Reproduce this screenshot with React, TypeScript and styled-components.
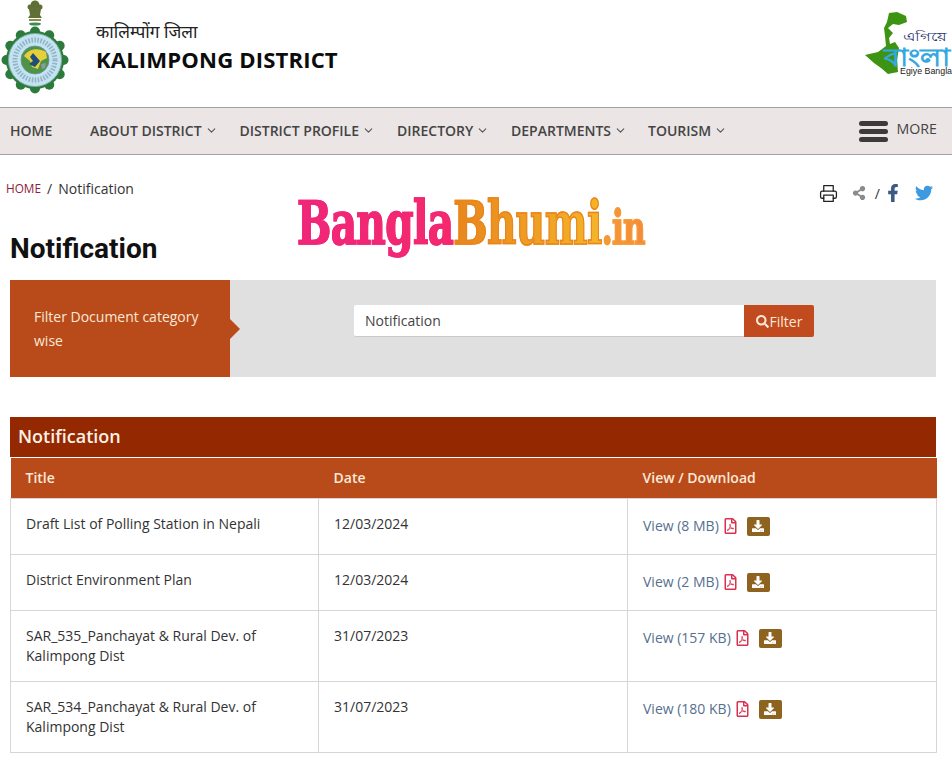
import React, { FC } from 'react'
import styled, { createGlobalStyle } from 'styled-components'
import { FaDownload, FaFacebookF, FaRegFilePdf, FaSearch, FaShareAlt, FaTwitter } from 'react-icons/fa'
import { FiChevronDown, FiPrinter } from 'react-icons/fi'

const GlobalStyle = createGlobalStyle`
	* {
		box-sizing: border-box;
	}
	html, body {
		margin: 0;
		padding: 0;
		background: #fff;
		overflow: hidden;
		font-family: 'Open Sans', 'Noto Sans', sans-serif;
		color: #333;
	}
`

const Page = styled.div`
	position: relative;
	width: 952px;
	height: 759px;
	overflow: hidden;
`

const Header = styled.header`
	height: 107px;
	display: flex;
	align-items: flex-start;
	justify-content: space-between;
`

const Brand = styled.div`
	display: flex;
	align-items: center;
	gap: 26px;
`

const BrandText = styled.div`
	display: flex;
	flex-direction: column;
	margin-top: -6px;
`

const HindiName = styled.span`
	font-size: 17.3px;
	line-height: 24px;
	color: #222;
	font-family: 'Noto Sans', 'Lohit Devanagari', 'FreeSans', sans-serif;
`

const EnglishName = styled.span`
	font-size: 22.1px;
	font-weight: 700;
	line-height: 30px;
	color: #0c0c0c;
	letter-spacing: 0.15px;
`

const Nav = styled.nav`
	height: 48px;
	background: #ebe5e5;
	border-top: 1px solid #a5a1a1;
	border-bottom: 1px solid #a5a1a1;
	display: flex;
	align-items: center;
	padding: 0 15px 0 10px;
	font-size: 14px;
	font-weight: 600;
	color: #444;
`

const NavItem = styled.div<{ $width: number }>`
	width: ${({ $width }) => $width}px;
	display: flex;
	align-items: center;
	gap: 3px;
	padding-bottom: 2px;
	white-space: nowrap;

	svg {
		width: 13px;
		height: 13px;
		color: #555;
	}
`

const MoreButton = styled.div`
	margin-left: auto;
	display: flex;
	align-items: center;
	gap: 9px;
	font-weight: 500;
	font-size: 14.2px;
`

const MoreLabel = styled.span`
	padding-bottom: 5px;
`

const Burger = styled.span`
	width: 29px;
	display: flex;
	flex-direction: column;
	gap: 3px;

	i {
		display: block;
		height: 5px;
		border-radius: 3px;
		background: #3f3a3a;
	}
`

const Crumbs = styled.div`
	height: 67px;
	padding: 24px 19px 0 6px;
	display: flex;
	justify-content: space-between;
	font-size: 14px;
	line-height: 19px;
`

const CrumbTrail = styled.div`
	display: flex;
	align-items: center;
	gap: 6px;
	height: 19px;
`

const CrumbLink = styled.span`
	font-size: 11.8px;
	color: #8e1d3a;
`

const ShareBar = styled.div`
	display: flex;
	align-items: center;
	height: 22px;
	margin-top: 3px;
	color: #333;
	font-size: 14px;
`

const ShareIcon = styled.span<{ $color: string; $size: number; $gap: number }>`
	display: inline-flex;
	color: ${({ $color }) => $color};
	margin-left: ${({ $gap }) => $gap}px;

	svg {
		width: ${({ $size }) => $size}px;
		height: ${({ $size }) => $size}px;
		stroke-width: 1.6;
	}
`

const Heading = styled.h1`
	margin: 0;
	padding-left: 10px;
	height: 58px;
	font-family: 'Roboto', sans-serif;
	font-size: 28px;
	font-weight: 700;
	line-height: 54px;
	color: #111;
`

const FilterBox = styled.section`
	margin: 0 16px 0 10px;
	height: 97px;
	background: #e0e0e0;
	display: flex;
`

const FilterLabel = styled.div`
	position: relative;
	width: 220px;
	background: #b94b1a;
	color: #fbe9d8;
	font-size: 14px;
	line-height: 24px;
	padding: 25px 20px 0 24px;

	&::after {
		content: '';
		position: absolute;
		right: -10px;
		top: 39px;
		border-left: 10px solid #b94b1a;
		border-top: 10px solid transparent;
		border-bottom: 10px solid transparent;
	}
`

const FilterForm = styled.div`
	display: flex;
	margin: 25px 0 0 124px;
	height: 32px;
`

const FilterInput = styled.div`
	width: 390px;
	background: #fff;
	border-bottom: 1px solid #c9c9c9;
	border-radius: 2px 0 0 2px;
	font-size: 14px;
	line-height: 31px;
	padding-left: 11px;
	color: #444;
`

const FilterButton = styled.div`
	width: 70px;
	background: #c24a1f;
	border-radius: 0 2px 2px 0;
	color: #fbe9d8;
	font-size: 14px;
	display: flex;
	align-items: center;
	justify-content: center;
	gap: 1px;

	svg {
		width: 13px;
		height: 13px;
	}
`

const TableTitle = styled.h2`
	margin: 40px 16px 0 10px;
	height: 40px;
	background: #942800;
	color: #fdf1e6;
	font-size: 18px;
	font-weight: 600;
	line-height: 39px;
	padding-left: 8px;
`

const Table = styled.table`
	margin: 1px 16px 0 10px;
	width: 926px;
	border-collapse: collapse;
	table-layout: fixed;
	font-size: 14px;
`

const HeadCell = styled.th<{ $width: number }>`
	width: ${({ $width }) => $width}px;
	height: 40px;
	background: #b94b1a;
	color: #fbe9d8;
	text-align: left;
	font-weight: 600;
	padding: 0 15px;
`

const Cell = styled.td`
	border: 1px solid #d6d6d6;
	vertical-align: top;
	padding: 15px 15px 13px;
	line-height: 20px;
	color: #333;
`

const Row = styled.tr<{ $height: number }>`
	height: ${({ $height }) => $height}px;
`

const FileLinks = styled.div`
	display: flex;
	align-items: center;
	height: 26px;
	margin-top: -1px;
`

const ViewLink = styled.span`
	color: #56708f;
`

const PdfIcon = styled(FaRegFilePdf)`
	width: 13px;
	height: 16px;
	color: #d9304f;
	margin: 1px 0 0 5px;
`

const DownloadButton = styled.span`
	width: 23px;
	height: 19px;
	margin: 1px 0 0 10px;
	border-radius: 2px;
	background: #8e6320;
	color: #fff;
	display: inline-flex;
	align-items: center;
	justify-content: center;

	svg {
		width: 12px;
		height: 12px;
	}
`

const Watermark = styled.div`
	position: absolute;
	left: 297px;
	top: 183px;
	display: flex;
	align-items: baseline;
	font-family: 'DejaVu Serif', serif;
	font-weight: 700;
	line-height: 80px;
	letter-spacing: -1px;
	white-space: nowrap;
	transform-origin: left top;
	transform: scaleX(0.677);
`

const WatermarkPart = styled.span<{ $from: string; $to: string; $size: number }>`
	font-size: ${({ $size }) => $size}px;
	background: linear-gradient(90deg, ${({ $from }) => $from}, ${({ $to }) => $to});
	-webkit-background-clip: text;
	background-clip: text;
	color: transparent;
	-webkit-text-stroke: 1.5px ${({ $from }) => $from};
`

const Emblem: FC = () => {
	const bumps = Array.from({ length: 12 }, (_, i) => (i * Math.PI) / 6)
	return (
		<svg width="70" height="100" viewBox="0 0 70 100">
			<g fill="#5f6f35">
				<circle cx="35" cy="5" r="4.5" />
				<circle cx="30" cy="7" r="2.5" />
				<circle cx="40" cy="7" r="2.5" />
				<path d="M29 9h12l-1 6 2 3H28l2-3z" />
			</g>
			<rect x="29" y="19" width="12" height="2" fill="#8a8a52" />
			<ellipse cx="35" cy="24" rx="6" ry="1.6" fill="#3f8a52" />
			{bumps.map(a => (
				<circle key={a} cx={35 + Math.cos(a) * 28.5} cy={60 + Math.sin(a) * 28.5} r="5" fill="#2c7a3c" />
			))}
			<circle cx="35" cy="60" r="29" fill="#2c7a3c" />
			<circle cx="35" cy="60" r="26.5" fill="#c4e3f2" stroke="#7fae9e" strokeWidth="1" />
			<circle cx="35" cy="60" r="20" fill="none" stroke="#5d8398" strokeWidth="5" strokeDasharray="1.5 1.5" opacity="0.5" />
			<circle cx="35" cy="60" r="14" fill="#4f9446" stroke="#6d8f9c" strokeWidth="0.8" />
			<path d="M24 56c4-7 14-9 22-4l1 6-6 3-3 8-6-2-2-6z" fill="#e6cf3c" />
			<path d="M33 53l7 8-5 6-6-3 4-3-3-4z" fill="#1d4f7a" />
			<path d="M41 64l5-1-1 5-3 1z" fill="#8a9aa0" />
		</svg>
	)
}

const BanglaLogo: FC = () => (
	<svg width="90" height="107" viewBox="862 0 90 107">
		<path
			d="M889 13L897 12L906 16L907 22L899 25L893 24L888 28L893 33L889 38L890 44L895 42L899 48L897 60L898 72L888 74L881 68L874 63L865 55L878 52L886 46L885 36L884 28L887 22Z"
			fill="#3d9413"
		/>
		<text x="884" y="66" fontFamily="'Noto Sans', sans-serif" fontSize="25" fontWeight="700" fill="#35a8e0" textLength="66" lengthAdjust="spacingAndGlyphs">
			বাংলা
		</text>
		<text x="903" y="41" fontFamily="'Noto Sans', sans-serif" fontSize="12" fill="#25306e" textLength="44" lengthAdjust="spacingAndGlyphs">
			এগিয়ে
		</text>
		<text x="900" y="74" fontFamily="'Liberation Sans', sans-serif" fontSize="8.5" fill="#222" textLength="52" lengthAdjust="spacingAndGlyphs">
			Egiye Bangla
		</text>
	</svg>
)

const navItems = [
	{ label: 'HOME', width: 80 },
	{ label: 'ABOUT DISTRICT', width: 149.5, chevron: true },
	{ label: 'DISTRICT PROFILE', width: 157.5, chevron: true },
	{ label: 'DIRECTORY', width: 114, chevron: true },
	{ label: 'DEPARTMENTS', width: 137, chevron: true },
	{ label: 'TOURISM', width: 100, chevron: true },
]

const rows = [
	{ title: 'Draft List of Polling Station in Nepali', date: '12/03/2024', size: '8 MB', height: 56 },
	{ title: 'District Environment Plan', date: '12/03/2024', size: '2 MB', height: 56 },
	{ title: 'SAR_535_Panchayat & Rural Dev. of Kalimpong Dist', date: '31/07/2023', size: '157 KB', height: 71 },
	{ title: 'SAR_534_Panchayat & Rural Dev. of Kalimpong Dist', date: '31/07/2023', size: '180 KB', height: 71 },
]

const App: FC = () => (
	<Page>
		<GlobalStyle />
		<Header>
			<Brand>
				<Emblem />
				<BrandText>
					<HindiName>कालिम्पोंग जिला</HindiName>
					<EnglishName>KALIMPONG DISTRICT</EnglishName>
				</BrandText>
			</Brand>
			<BanglaLogo />
		</Header>
		<Nav>
			{navItems.map(item => (
				<NavItem key={item.label} $width={item.width}>
					{item.label}
					{item.chevron && <FiChevronDown />}
				</NavItem>
			))}
			<MoreButton>
				<Burger>
					<i />
					<i />
					<i />
				</Burger>
				<MoreLabel>MORE</MoreLabel>
			</MoreButton>
		</Nav>
		<Crumbs>
			<CrumbTrail>
				<CrumbLink>HOME</CrumbLink>/<span>Notification</span>
			</CrumbTrail>
			<ShareBar>
				<ShareIcon $color="#222" $size={19} $gap={0}>
					<FiPrinter />
				</ShareIcon>
				<ShareIcon $color="#8b8b8b" $size={14} $gap={14}>
					<FaShareAlt />
				</ShareIcon>
				<ShareIcon $color="#333" $size={14} $gap={9}>
					/
				</ShareIcon>
				<ShareIcon $color="#3b5a85" $size={18} $gap={3.5}>
					<FaFacebookF />
				</ShareIcon>
				<ShareIcon $color="#3d9ae0" $size={18} $gap={13.5}>
					<FaTwitter />
				</ShareIcon>
			</ShareBar>
		</Crumbs>
		<Heading>Notification</Heading>
		<FilterBox>
			<FilterLabel>Filter Document category wise</FilterLabel>
			<FilterForm>
				<FilterInput>Notification</FilterInput>
				<FilterButton>
					<FaSearch />
					Filter
				</FilterButton>
			</FilterForm>
		</FilterBox>
		<TableTitle>Notification</TableTitle>
		<Table>
			<thead>
				<tr>
					<HeadCell $width={308}>Title</HeadCell>
					<HeadCell $width={309}>Date</HeadCell>
					<HeadCell $width={309}>View / Download</HeadCell>
				</tr>
			</thead>
			<tbody>
				{rows.map(row => (
					<Row key={row.title + row.size} $height={row.height}>
						<Cell>{row.title}</Cell>
						<Cell>{row.date}</Cell>
						<Cell>
							<FileLinks>
								<ViewLink>View ({row.size})</ViewLink>
								<PdfIcon />
								<DownloadButton>
									<FaDownload />
								</DownloadButton>
							</FileLinks>
						</Cell>
					</Row>
				))}
			</tbody>
		</Table>
		<Watermark>
			<WatermarkPart $from="#f0267a" $to="#f5296a" $size={60}>Bangla</WatermarkPart>
			<WatermarkPart $from="#e8851c" $to="#f5b52a" $size={60}>Bhumi</WatermarkPart>
			<WatermarkPart $from="#f59a35" $to="#f58a3a" $size={46}>.in</WatermarkPart>
		</Watermark>
	</Page>
)

export default App
